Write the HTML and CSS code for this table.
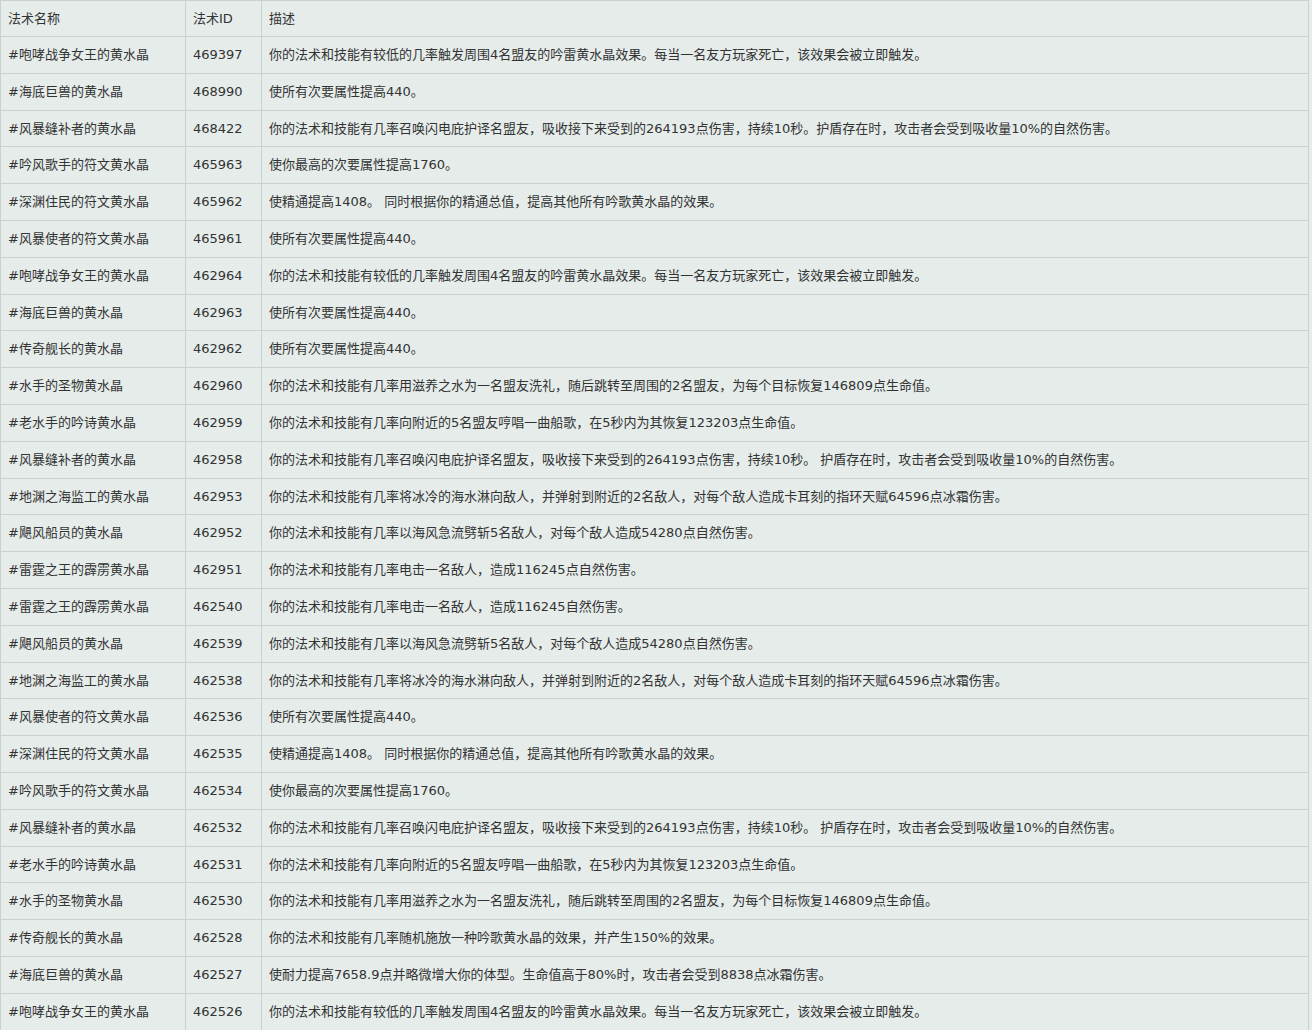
FILE: index.html
```html
<!DOCTYPE html>
<html lang="zh-CN">
<head>
<meta charset="utf-8">
<title>法术列表</title>
<link rel="stylesheet" href="styles.css">
</head>
<body>
<div class="wrap">
<table class="spells">
<colgroup><col class="c-name"><col class="c-id"><col class="c-desc"></colgroup>
<thead>
<tr><th>法术名称</th><th>法术ID</th><th>描述</th></tr>
</thead>
<tbody>
<tr><td>#咆哮战争女王的黄水晶</td><td>469397</td><td>你的法术和技能有较低的几率触发周围4名盟友的吟雷黄水晶效果。每当一名友方玩家死亡，该效果会被立即触发。</td></tr>
<tr><td>#海底巨兽的黄水晶</td><td>468990</td><td>使所有次要属性提高440。</td></tr>
<tr><td>#风暴缝补者的黄水晶</td><td>468422</td><td>你的法术和技能有几率召唤闪电庇护译名盟友，吸收接下来受到的264193点伤害，持续10秒。护盾存在时，攻击者会受到吸收量10%的自然伤害。</td></tr>
<tr><td>#吟风歌手的符文黄水晶</td><td>465963</td><td>使你最高的次要属性提高1760。</td></tr>
<tr><td>#深渊住民的符文黄水晶</td><td>465962</td><td>使精通提高1408。 同时根据你的精通总值，提高其他所有吟歌黄水晶的效果。</td></tr>
<tr><td>#风暴使者的符文黄水晶</td><td>465961</td><td>使所有次要属性提高440。</td></tr>
<tr><td>#咆哮战争女王的黄水晶</td><td>462964</td><td>你的法术和技能有较低的几率触发周围4名盟友的吟雷黄水晶效果。每当一名友方玩家死亡，该效果会被立即触发。</td></tr>
<tr><td>#海底巨兽的黄水晶</td><td>462963</td><td>使所有次要属性提高440。</td></tr>
<tr><td>#传奇舰长的黄水晶</td><td>462962</td><td>使所有次要属性提高440。</td></tr>
<tr><td>#水手的圣物黄水晶</td><td>462960</td><td>你的法术和技能有几率用滋养之水为一名盟友洗礼，随后跳转至周围的2名盟友，为每个目标恢复146809点生命值。</td></tr>
<tr><td>#老水手的吟诗黄水晶</td><td>462959</td><td>你的法术和技能有几率向附近的5名盟友哼唱一曲船歌，在5秒内为其恢复123203点生命值。</td></tr>
<tr><td>#风暴缝补者的黄水晶</td><td>462958</td><td>你的法术和技能有几率召唤闪电庇护译名盟友，吸收接下来受到的264193点伤害，持续10秒。 护盾存在时，攻击者会受到吸收量10%的自然伤害。</td></tr>
<tr><td>#地渊之海监工的黄水晶</td><td>462953</td><td>你的法术和技能有几率将冰冷的海水淋向敌人，并弹射到附近的2名敌人，对每个敌人造成卡耳刻的指环天赋64596点冰霜伤害。</td></tr>
<tr><td>#飓风船员的黄水晶</td><td>462952</td><td>你的法术和技能有几率以海风急流劈斩5名敌人，对每个敌人造成54280点自然伤害。</td></tr>
<tr><td>#雷霆之王的霹雳黄水晶</td><td>462951</td><td>你的法术和技能有几率电击一名敌人，造成116245点自然伤害。</td></tr>
<tr><td>#雷霆之王的霹雳黄水晶</td><td>462540</td><td>你的法术和技能有几率电击一名敌人，造成116245自然伤害。</td></tr>
<tr><td>#飓风船员的黄水晶</td><td>462539</td><td>你的法术和技能有几率以海风急流劈斩5名敌人，对每个敌人造成54280点自然伤害。</td></tr>
<tr><td>#地渊之海监工的黄水晶</td><td>462538</td><td>你的法术和技能有几率将冰冷的海水淋向敌人，并弹射到附近的2名敌人，对每个敌人造成卡耳刻的指环天赋64596点冰霜伤害。</td></tr>
<tr><td>#风暴使者的符文黄水晶</td><td>462536</td><td>使所有次要属性提高440。</td></tr>
<tr><td>#深渊住民的符文黄水晶</td><td>462535</td><td>使精通提高1408。 同时根据你的精通总值，提高其他所有吟歌黄水晶的效果。</td></tr>
<tr><td>#吟风歌手的符文黄水晶</td><td>462534</td><td>使你最高的次要属性提高1760。</td></tr>
<tr><td>#风暴缝补者的黄水晶</td><td>462532</td><td>你的法术和技能有几率召唤闪电庇护译名盟友，吸收接下来受到的264193点伤害，持续10秒。 护盾存在时，攻击者会受到吸收量10%的自然伤害。</td></tr>
<tr><td>#老水手的吟诗黄水晶</td><td>462531</td><td>你的法术和技能有几率向附近的5名盟友哼唱一曲船歌，在5秒内为其恢复123203点生命值。</td></tr>
<tr><td>#水手的圣物黄水晶</td><td>462530</td><td>你的法术和技能有几率用滋养之水为一名盟友洗礼，随后跳转至周围的2名盟友，为每个目标恢复146809点生命值。</td></tr>
<tr><td>#传奇舰长的黄水晶</td><td>462528</td><td>你的法术和技能有几率随机施放一种吟歌黄水晶的效果，并产生150%的效果。</td></tr>
<tr><td>#海底巨兽的黄水晶</td><td>462527</td><td>使耐力提高7658.9点并略微增大你的体型。生命值高于80%时，攻击者会受到8838点冰霜伤害。</td></tr>
<tr><td>#咆哮战争女王的黄水晶</td><td>462526</td><td>你的法术和技能有较低的几率触发周围4名盟友的吟雷黄水晶效果。每当一名友方玩家死亡，该效果会被立即触发。</td></tr>
</tbody>
</table>
</div>
</body>
</html>
```
FILE: styles.css
```css
html, body {
  margin: 0;
  padding: 0;
  background: #e5ecea;
}
.wrap {
  width: 1309px;
}
.spells {
  width: 1309px;
  table-layout: fixed;
  border-collapse: collapse;
  background: #e5ecea;
  color: #333333;
  font-family: "DejaVu Sans", "Noto Sans CJK SC", sans-serif;
  font-size: 13px;
}
.c-name { width: 185px; }
.c-id { width: 76px; }
.spells th,
.spells td {
  border: 1px solid #c9d1cf;
  padding: 8px 7px;
  line-height: 19.8px;
  text-align: left;
  font-weight: normal;
  white-space: nowrap;
  overflow: hidden;
}
.spells thead th {
  line-height: 19px;
}
```
